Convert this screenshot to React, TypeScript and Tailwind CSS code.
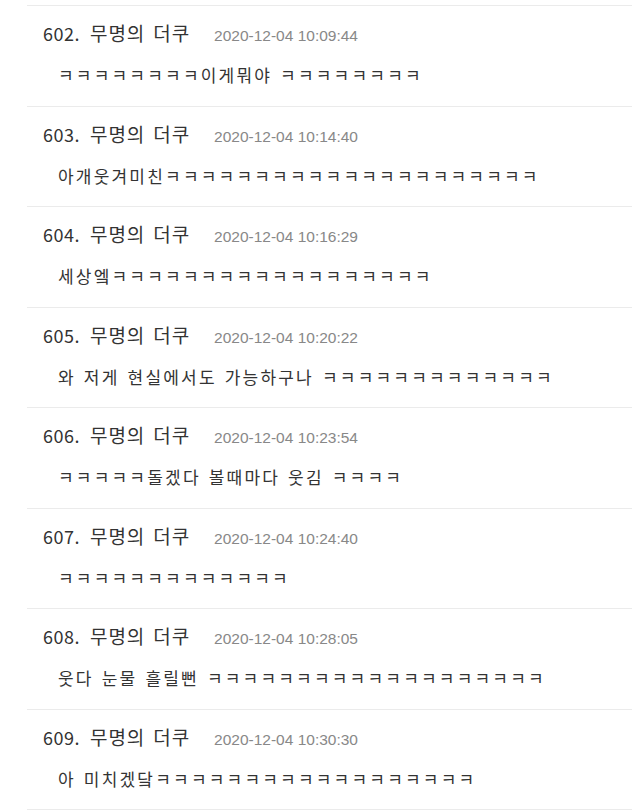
import React from "react";

const K = (n: number) => "ㅋ".repeat(n);

const items = [
  { no: 602, date: "2020-12-04 10:09:44", text: `${K(8)}이게뭐야 ${K(8)}` },
  { no: 603, date: "2020-12-04 10:14:40", text: `아개웃겨미친${K(21)}` },
  { no: 604, date: "2020-12-04 10:16:29", text: `세상엨${K(18)}` },
  { no: 605, date: "2020-12-04 10:20:22", text: `와 저게 현실에서도 가능하구나 ${K(13)}` },
  { no: 606, date: "2020-12-04 10:23:54", text: `${K(5)}돌겠다 볼때마다 웃김 ${K(4)}` },
  { no: 607, date: "2020-12-04 10:24:40", text: `${K(13)}` },
  { no: 608, date: "2020-12-04 10:28:05", text: `웃다 눈물 흘릴뻔 ${K(19)}` },
  { no: 609, date: "2020-12-04 10:30:30", text: `아 미치겠닼${K(18)}` },
];

export default function App() {
  return (
    <div className="w-[632px] h-[810px] overflow-hidden bg-white">
      <div className="ml-[27px] mt-[5px] border-b border-[#ebebeb]">
        {items.map((it) => (
          <div
            key={it.no}
            className="h-[100.5px] border-t border-[#ebebeb] pl-[16px] pt-[15px]"
          >
            <div
              className="flex items-baseline h-[24px] text-[#333]"
              style={{ fontFamily: '"Noto Sans CJK KR", sans-serif' }}
            >
              <span className="text-[18px] leading-[24px] tracking-[0.5px]">
                {it.no}.
              </span>
              <span className="ml-[10px] text-[19px] leading-[24px] tracking-[0.9px] [word-spacing:3px]">
                무명의 더쿠
              </span>
              <span
                className="ml-[24px] text-[15.5px] leading-[24px] text-[#888]"
                style={{ fontFamily: '"Liberation Sans", Arial, sans-serif' }}
              >
                {it.date}
              </span>
            </div>
            <div
              className="mt-[18px] pl-[15px] text-[17px] leading-[24px] text-[#333] tracking-[2.2px] [word-spacing:2px] whitespace-nowrap"
              style={{ fontFamily: '"Noto Sans CJK KR", sans-serif' }}
            >
              {it.text}
            </div>
          </div>
        ))}
      </div>
    </div>
  );
}
